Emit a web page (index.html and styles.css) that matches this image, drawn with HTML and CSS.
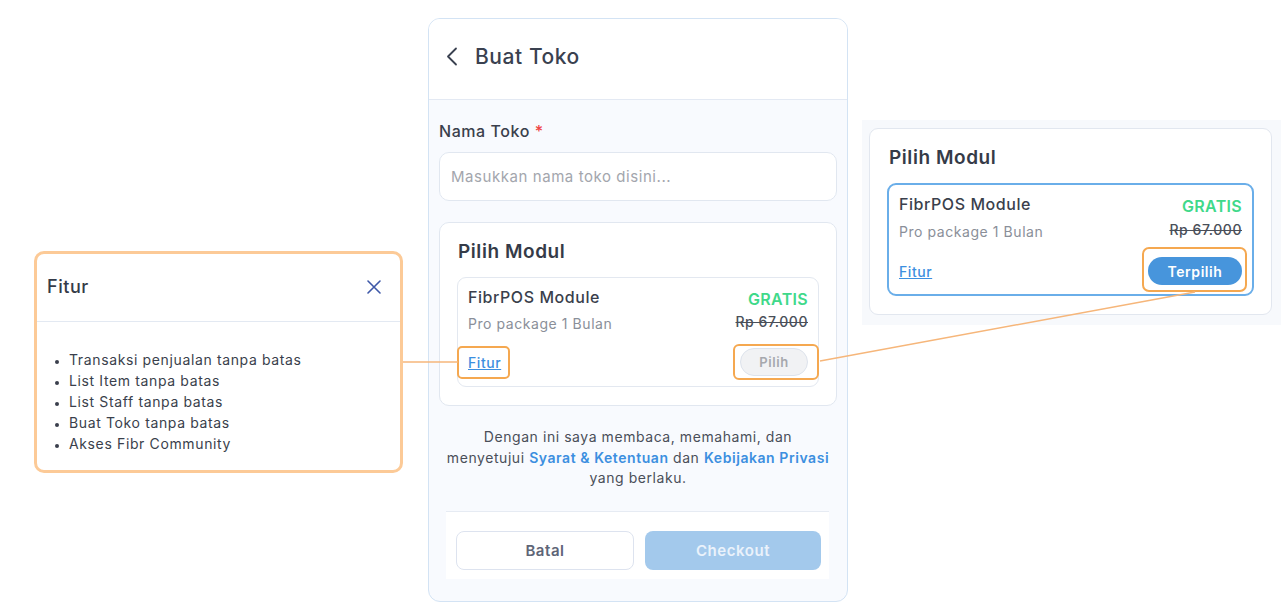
FILE: index.html
```html
<!DOCTYPE html>
<html lang="id">
<head>
<meta charset="utf-8">
<title>Buat Toko</title>
<link rel="stylesheet" href="styles.css">
</head>
<body>
<div class="canvas">
  <section class="popup">
    <div class="popup-head">
      <span class="popup-title">Fitur</span>
      <svg class="close" width="14" height="14" viewBox="0 0 14 14"><path d="M1 1L13 13M13 1L1 13" stroke="#3e58a8" stroke-width="1.6" fill="none" stroke-linecap="round"/></svg>
    </div>
    <ul class="popup-list">
      <li>Transaksi penjualan tanpa batas</li>
      <li>List Item tanpa batas</li>
      <li>List Staff tanpa batas</li>
      <li>Buat Toko tanpa batas</li>
      <li>Akses Fibr Community</li>
    </ul>
  </section>

  <main class="phone">
    <header class="phone-head">
      <svg class="back" width="12" height="19" viewBox="0 0 12 19"><path d="M10 1.5L2 9.5L10 17.5" stroke="#3a4150" stroke-width="1.8" fill="none" stroke-linecap="round" stroke-linejoin="round"/></svg>
      <h1 class="phone-title">Buat Toko</h1>
    </header>
    <div class="phone-body">
      <label class="field-label">Nama Toko <span class="req">*</span></label>
      <div class="input">Masukkan nama toko disini...</div>

      <div class="module-card">
        <h2 class="module-title">Pilih Modul</h2>
        <div class="module">
          <div class="module-row first">
            <span class="m-name">FibrPOS Module</span>
            <span class="m-free">GRATIS</span>
          </div>
          <div class="module-row second">
            <span class="m-sub">Pro package 1 Bulan</span>
            <span class="m-price">Rp 67.000</span>
          </div>
          <div class="module-row third">
            <a class="m-link hl hl-fitur">Fitur</a>
            <span class="pill pill-off hl hl-pilih">Pilih</span>
          </div>
        </div>
      </div>

      <p class="terms">Dengan ini saya membaca, memahami, dan<br>menyetujui <a class="t-link">Syarat &amp; Ketentuan</a> dan <a class="t-link">Kebijakan Privasi</a><br>yang berlaku.</p>

      <div class="footer">
        <button class="btn btn-cancel">Batal</button>
        <button class="btn btn-checkout">Checkout</button>
      </div>
    </div>
  </main>

  <aside class="panel">
    <div class="panel-card">
      <h2 class="module-title panel-title">Pilih Modul</h2>
      <div class="module selected">
        <div class="module-row first">
          <span class="m-name">FibrPOS Module</span>
          <span class="m-free">GRATIS</span>
        </div>
        <div class="module-row second">
          <span class="m-sub">Pro package 1 Bulan</span>
          <span class="m-price">Rp 67.000</span>
        </div>
        <div class="module-row third">
          <a class="m-link">Fitur</a>
          <span class="pill pill-on hl hl-terpilih">Terpilih</span>
        </div>
      </div>
    </div>
  </aside>

  <svg class="connectors" width="1283" height="603" viewBox="0 0 1283 603">
    <line x1="403" y1="362" x2="458" y2="362" stroke="#f6b67a" stroke-width="1.5"/>
    <line x1="820" y1="361" x2="1195" y2="292" stroke="#f6b67a" stroke-width="1.5"/>
  </svg>
</div>
</body>
</html>
```

FILE: styles.css
```css
* { box-sizing: border-box; }
html, body { margin: 0; padding: 0; background: #ffffff; }
body {
  font-family: "Inter", "Noto Sans", sans-serif;
  color: #3a4150;
  width: 1283px;
  height: 603px;
  overflow: hidden;
  letter-spacing: 0.035em;
}
.canvas {
  position: relative;
  display: flex;
  align-items: flex-start;
  padding-left: 34px;
  width: 1283px;
  height: 603px;
}

/* Popup */
.popup {
  margin-top: 251px;
  width: 369px;
  height: 222px;
  border: 3px solid #fcca97;
  border-radius: 10px;
  background: #fff;
}
.popup-head {
  height: 68px;
  display: flex;
  align-items: center;
  justify-content: space-between;
  padding: 0 19px 0 10px;
  border-bottom: 1.5px solid #e3e9f2;
}
.popup-title { font-size: 18px; font-weight: 500; color: #353b48; margin-top: -2px; }
.close { margin-top: -2px; }
.popup-list {
  margin: 0;
  padding: 27px 0 0 32px;
  font-size: 14px;
  line-height: 21px;
  color: #3a3f4c;
  letter-spacing: 0.045em;
}
.popup-list li::marker { font-size: 11px; }

/* Phone */
.phone {
  margin-left: 25px;
  margin-top: 18px;
  width: 420px;
  height: 584px;
  border: 1.5px solid #d3e3f4;
  border-radius: 12px;
  background: #f8fafe;
  overflow: hidden;
  display: flex;
  flex-direction: column;
}
.phone-head {
  height: 81px;
  flex: none;
  background: #fff;
  border-bottom: 1px solid #e3e9f3;
  display: flex;
  align-items: center;
  padding: 0 0 6px 17px;
  gap: 17px;
}
.phone-title { margin: 0; font-size: 21px; font-weight: 500; color: #3a4150; }
.phone-body {
  padding: 21px 10px 0 10px;
  display: flex;
  flex-direction: column;
}
.field-label { font-size: 16px; line-height: 20px; font-weight: 500; color: #3a3f4c; }
.req { color: #ef4444; }
.input {
  margin-top: 11px;
  height: 49px;
  border: 1.5px solid #e1e7f0;
  border-radius: 10px;
  background: #fff;
  padding: 0 11px;
  display: flex;
  align-items: center;
  font-size: 15px;
  color: #a3a6ad;
}
.module-card {
  margin-top: 21px;
  height: 184px;
  background: #fff;
  border: 1.5px solid #e1e7f0;
  border-radius: 10px;
  padding: 16px 17px 0 17px;
}
.module-title { margin: 0; font-size: 19px; line-height: 26px; font-weight: 600; color: #353b48; padding-left: 1px; }
.module {
  margin-top: 12px;
  border: 1.5px solid #e3e8f0;
  border-radius: 9px;
  padding: 8px 10px 10px 10px;
  background: #fff;
}
.module-row { display: flex; justify-content: space-between; align-items: center; }
.module-row.first { height: 22px; }
.module-row.second { height: 20px; margin-top: 4px; }
.module-row.third { height: 28px; margin-top: 16px; }
.m-name { font-size: 16px; font-weight: 500; color: #3a3f4c; }
.m-free { font-size: 16px; font-weight: 600; color: #3fd98a; margin-top: 4px; letter-spacing: 0.02em; }
.m-sub { font-size: 14px; color: #8a8f99; margin-top: 2px; }
.m-price { font-size: 14px; font-weight: 500; color: #4a4f59; text-decoration: line-through; margin-top: -2px; }
.m-link { font-size: 14px; font-weight: 500; color: #3c8fe0; text-decoration: underline; }
.pill {
  height: 28px;
  border-radius: 14px;
  display: inline-flex;
  align-items: center;
  justify-content: center;
  font-size: 13px;
  font-weight: 600;
}
.pill-off {
  width: 68px;
  background: #f1f2f4;
  border: 1.5px solid #dde3ec;
  color: #a6a8ad;
}
.pill-on {
  width: 94px;
  background: #4795dc;
  color: #fff;
  font-size: 14px;
}

/* Annotation highlight boxes */
.hl { position: relative; }
.hl::after {
  content: "";
  position: absolute;
  border: 2px solid #f5a850;
  border-radius: 5px;
}
.hl-fitur::after { left: -11px; right: -9px; top: -8px; bottom: -8px; }
.hl-pilih::after { left: -8px; right: -12px; top: -5px; bottom: -5px; border-radius: 6px; }
.hl-terpilih::after { left: -6px; right: -5px; top: -10px; bottom: -7px; border-radius: 7px; }

.terms {
  margin: 21px 0 0 0;
  text-align: center;
  font-size: 14px;
  line-height: 20.5px;
  color: #4a4f59;
}
.t-link { color: #3c8fe0; font-weight: 600; }
.footer {
  margin: 22px 8px 0 7px;
  border-top: 1.5px solid #e6ebf3;
  background: #fff;
  height: 68px;
  display: flex;
  gap: 11px;
  padding: 19px 8px 0 10px;
}
.btn {
  flex: 1;
  height: 39px;
  border-radius: 8px;
  font-family: inherit;
  letter-spacing: inherit;
  font-size: 15px;
  font-weight: 600;
}
.btn-cancel { background: #fff; border: 1.5px solid #dde3ef; color: #5e6577; }
.btn-checkout { background: #a3c9ec; border: none; color: #eaf2fb; }

/* Right panel */
.panel {
  margin-left: 14px;
  margin-top: 120px;
  width: 419px;
  height: 205px;
  background: #f7f9fc;
  padding: 8px 9px 0 7px;
}
.panel-card {
  height: 187px;
  background: #fff;
  border: 1.5px solid #e2e7ef;
  border-radius: 9px;
  padding: 16px 17px 0 17px;
}
.panel-title { padding-left: 2px; }
.module.selected {
  border: 2px solid #6aaee9;
  height: 113px;
  padding-top: 8px;
}
.module.selected .module-row.second { margin-top: 5px; }
.module.selected .module-row.third { margin-top: 17px; }

.connectors {
  position: absolute;
  left: 0;
  top: 0;
  pointer-events: none;
}
```
